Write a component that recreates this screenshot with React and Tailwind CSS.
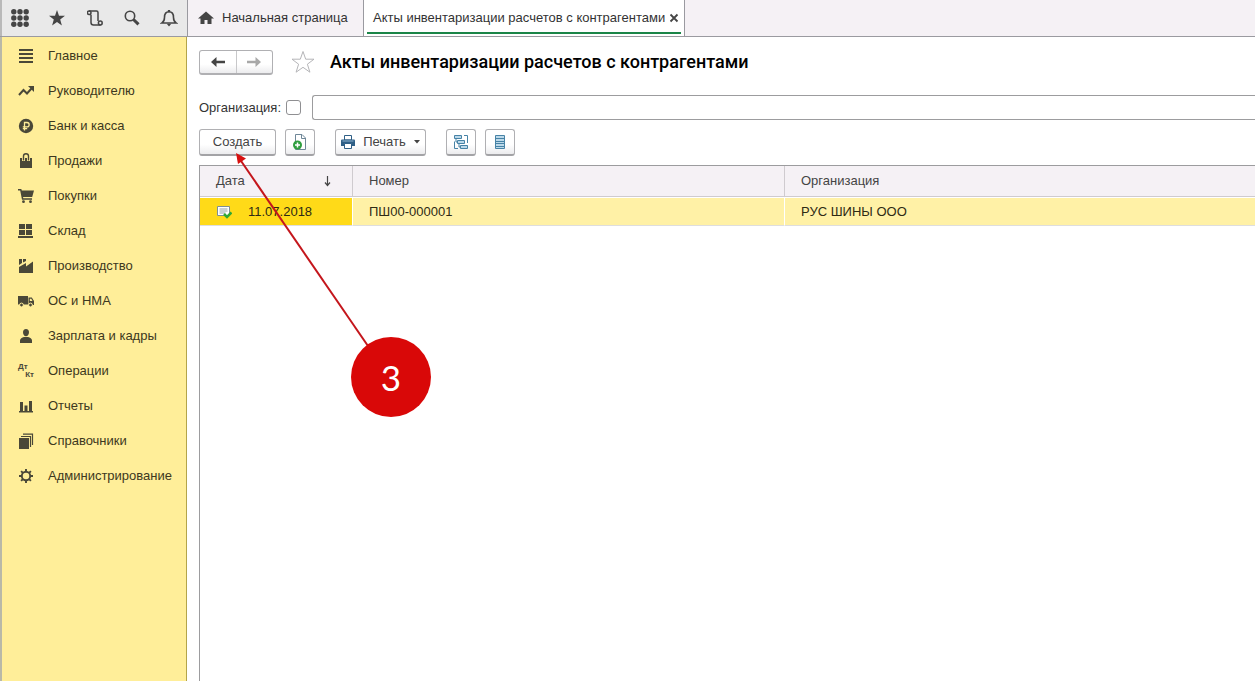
function Svg({ children, w = 16, className = '' }) {
  return (
    <svg width={w} height={w} viewBox="0 0 16 16" fill="currentColor" aria-hidden="true" className={'shrink-0 ' + className}>
      {children}
    </svg>
  );
}

const icons = {
  menu: <path d="M1 1h14v2H1zM1 5h14v2H1zM1 9h14v2H1zM1 13h14v2H1z" />,
  trend: (
    <>
      <path d="M1 12l4.500-5 3.500 3.500 4.500-5" fill="none" stroke="currentColor" strokeWidth="2" />
      <path d="M10 3h6v6z" />
    </>
  ),
  ruble: (
    <>
      <circle cx="8" cy="8" r="7.200" />
      <path d="M6.500 12.500V4.500h2.500a2 2 0 0 1 0 4.300H4.800M4.800 10.700h4.400" fill="none" stroke="#ffee99" strokeWidth="1.300" />
    </>
  ),
  bag: (
    <>
      <path d="M2 5h12v10H2z" />
      <path d="M5.500 8V3.500Q5.500 1 8 1t2.500 2.500V8" fill="none" stroke="#ffee99" strokeWidth="3" />
      <path d="M5.500 7.500V3Q5.500 .8 8 .8t2.500 2.200v4.500" fill="none" stroke="currentColor" strokeWidth="1.400" />
      <path d="M7 5h2v3H7z" />
    </>
  ),
  cart: (
    <>
      <path d="M0 1h3.300l.5 1.500H16L14.200 9H5l.3 1.300h8.700v1.500H4L2.200 2.500H0z" />
      <circle cx="5.500" cy="13.700" r="1.400" />
      <circle cx="12.500" cy="13.700" r="1.400" />
    </>
  ),
  stock: <path d="M1 1h6v5H1zM8 1h6v5H8zM1 7h6v5H1zM8 7h6v5H8zM0 13h15v2H0z" />,
  factory: <path d="M1 15V9l7-4v3.500l7-5V15zM1 1h3v4L1 7zM5 1h3v2L5 4.500z" />,
  truck: (
    <>
      <path d="M0 3h10v8.500H0zM10.500 4.500h3.300L16 8v4h-5.500z" />
      <path d="M11.800 5.700h1.500L14.500 8h-2.700z" fill="#ffee99" />
      <circle cx="3.500" cy="12" r="1.900" stroke="#ffee99" />
      <circle cx="12.500" cy="12" r="1.900" stroke="#ffee99" />
    </>
  ),
  person: <path d="M8 1c2 0 3 1.400 3 3.200C11 6.500 9.800 8.200 8 8.200S5 6.500 5 4.200C5 2.400 6 1 8 1zM2 15v-2.500C2 10.500 4 9.500 6 9h4c2 .5 4 1.500 4 3.500V15z" />,
  chart: <path d="M1 13h14v1.500H1zM2 4h3v9H2zM6.500 7.500h3V13h-3zM11 3h3v10h-3z" />,
  books: (
    <>
      <path d="M1 5h10v11H1z" />
      <path d="M3 3.500h9.500V14M5 1.200h9.500V12" fill="none" stroke="currentColor" strokeWidth="1.200" />
    </>
  ),
  gear: (
    <>
      <circle cx="8" cy="8" r="4.200" fill="none" stroke="currentColor" strokeWidth="1.900" />
      <path d="M8 1v3M8 12v3M1 8h3M12 8h3M3.100 3.100l2 2M10.900 10.900l2 2M12.900 3.100l-2 2M5.100 10.900l-2 2" stroke="currentColor" strokeWidth="1.900" />
    </>
  ),
};

const sections = [
  ['menu', 'Главное'],
  ['trend', 'Руководителю'],
  ['ruble', 'Банк и касса'],
  ['bag', 'Продажи'],
  ['cart', 'Покупки'],
  ['stock', 'Склад'],
  ['factory', 'Производство'],
  ['truck', 'ОС и НМА'],
  ['person', 'Зарплата и кадры'],
  ['dtkt', 'Операции'],
  ['chart', 'Отчеты'],
  ['books', 'Справочники'],
  ['gear', 'Администрирование'],
];

function DtKt() {
  return (
    <span aria-hidden="true" className="flex h-4 w-4 shrink-0 flex-col text-[8px] leading-[8px] font-bold text-[#4a4838]">
      <span>Дт</span>
      <span className="self-end">Кт</span>
    </span>
  );
}

const tools = [
  [
    'Все функции',
    <Svg w={18}>
      {[2.500, 8, 13.500].map((y) => [2.500, 8, 13.500].map((x) => <circle key={x + '-' + y} cx={x} cy={y} r="2.400" />))}
    </Svg>,
  ],
  ['Избранное', <Svg><path d="M8 0l2 5.700 6 .1-4.800 3.700L12.900 15.500 8 12l-4.900 3.500 1.700-6L0 5.800l6-.1z" /></Svg>],
  [
    'История',
    <Svg>
      <g fill="none" stroke="currentColor" strokeWidth="1.500">
        <path d="M4 4.800V12.500q0 2.500 2.500 2.500h7M2 1H9.500Q11 1 11 2.500V11" />
        <circle cx="2.200" cy="2.800" r="1.800" />
        <circle cx="13.300" cy="13" r="1.900" />
      </g>
    </Svg>,
  ],
  [
    'Поиск',
    <Svg>
      <circle cx="6" cy="6" r="4.700" fill="none" stroke="currentColor" strokeWidth="1.600" />
      <path d="M9.500 9.500l5 4.800" stroke="currentColor" strokeWidth="3" />
    </Svg>,
  ],
  [
    'Уведомления',
    <Svg w={18}>
      <path d="M1.500 12.500q2.500-1.500 2.500-5C4 4 5.500 2.500 8 2.500s4 1.500 4 5q0 3.500 2.500 5z" fill="none" stroke="currentColor" strokeWidth="1.400" />
      <path d="M7 .8h2v2H7zM6 13h4l-2 2.500z" />
    </Svg>,
  ],
];

const btn =
  'flex h-[27px] items-center justify-center rounded-[3px] border border-[#b0b0b3] border-b-2 border-b-[#a3a3a6] bg-linear-to-b from-white from-60% to-[#ececee] text-[#444]';

function ArrowIcon({ flip }) {
  return (
    <svg width="14" height="10" viewBox="0 0 14 10" fill="currentColor" aria-hidden="true" className={flip ? 'rotate-180' : ''}>
      <path d="M0 5l5.500-5v3.700H14v2.600H5.500V10z" />
    </svg>
  );
}

export default function App() {
  return (
    <div className="relative flex min-h-screen flex-col overflow-hidden bg-white font-['Liberation_Sans',Arial,sans-serif] text-[13px] leading-4 text-[#333]">
      <header className="flex h-[37px] border-b border-[#9a9aa0] bg-[#f5f1f5]">
        <div className="flex w-[188px] shrink-0 items-center justify-between border-r border-l-2 border-r-[#9a9aa0] border-l-[#b9b9b9] bg-[#e9e9e9] pr-2 pl-2 text-[#454545]">
          {tools.map(([label, icon]) => (
            <button key={label} type="button" aria-label={label} className="flex w-5 justify-center">
              {icon}
            </button>
          ))}
        </div>
        <nav className="flex">
          <a href="#home" className="flex w-44 items-center gap-2 border-r border-[#9a9aa0] pl-2.5 whitespace-nowrap">
            <Svg className="text-[#454545]"><path d="M8 1.500l8 7h-2.500V14H9.500v-4h-3v4H2.500V8.500H0z" /></Svg>
            Начальная страница
          </a>
          <div className="flex border-r border-[#9a9aa0] bg-white px-[3px]">
            <div className="mb-0.5 flex items-center gap-1 border-b-2 border-[#1b8548] pt-1 pr-0.5 pl-1.5 whitespace-nowrap">
              <a href="#acts">Акты инвентаризации расчетов с контрагентами</a>
              <button type="button" aria-label="Закрыть вкладку">
                <svg width="10" height="10" viewBox="0 0 10 10" stroke="#454545" strokeWidth="1.800" aria-hidden="true">
                  <path d="M1.500 1.500l7 7M8.500 1.500l-7 7" />
                </svg>
              </button>
            </div>
          </div>
        </nav>
      </header>

      <div className="flex grow">
        <aside className="w-[187px] shrink-0 border-r border-l-2 border-r-[#b3a44a] border-l-[#b9b9a8] bg-[#ffee99] pt-px">
          <ul>
            {sections.map(([icon, label]) => (
              <li key={label}>
                <a href={'#' + icon} className="flex h-[35px] items-center gap-3.5 pl-4 whitespace-nowrap text-[#3d3820]">
                  {icon === 'dtkt' ? <DtKt /> : <Svg className="text-[#4a4838]">{icons[icon]}</Svg>}
                  {label}
                </a>
              </li>
            ))}
          </ul>
        </aside>

        <main className="flex min-w-0 grow flex-col pt-3 pl-3">
          <div className="flex h-[26px] items-center">
            <div className="flex h-[25px] w-[74px] rounded-[3px] border border-b-2 border-[#b0b0b3] bg-linear-to-b from-white from-60% to-[#ececee]">
              <button type="button" aria-label="Назад" className="flex flex-1 items-center justify-center border-r border-[#c8c8ca] text-[#444]">
                <ArrowIcon />
              </button>
              <button type="button" aria-label="Вперед" className="flex flex-1 items-center justify-center text-[#a8a8a8]">
                <ArrowIcon flip />
              </button>
            </div>
            <button type="button" aria-label="Добавить в избранное" className="ml-[18px]">
              <svg width="24" height="24" viewBox="0 0 24 24" fill="none" stroke="#b5b5b8" aria-hidden="true">
                <path d="M12 1.500l2.700 7.700h8.300l-6.600 5 2.500 8L12 17.300l-6.900 4.900 2.500-8L1 9.200h8.300z" />
              </svg>
            </button>
            <h1 className="ml-[15px] font-[Roboto,sans-serif] text-[18px] leading-6 font-medium whitespace-nowrap text-black">Акты инвентаризации расчетов с контрагентами</h1>
          </div>

          <div className="mt-5 flex h-[25px] items-center">
            <label htmlFor="use-org" className="w-[87px]">Организация:</label>
            <input id="use-org" type="checkbox" className="size-[15px] appearance-none rounded-[3px] border border-[#8f8f92] bg-white checked:bg-[#1b8548]" />
            <input type="text" aria-label="Организация" className="ml-[11px] h-[25px] min-w-0 grow rounded-l-[3px] border border-r-0 border-[#9c9c9e] px-2" />
          </div>

          <div className="mt-[9px] flex">
            <button type="button" className={btn + ' w-[77px]'}>Создать</button>
            <button type="button" aria-label="Создать копированием" className={btn + ' ml-[9px] w-[30px]'}>
              <svg width="16" height="16" viewBox="0 0 16 16" aria-hidden="true">
                <path d="M3.500.5h6.500l3.500 3.500v11.500h-10z" fill="#fff" stroke="#6f8798" />
                <path d="M9.500.5v4h4" fill="none" stroke="#6f8798" />
                <circle cx="5.500" cy="11" r="4.500" fill="#2f9e3f" />
                <path d="M5.500 8.500v5M3 11h5" stroke="#fff" strokeWidth="1.500" />
              </svg>
            </button>
            <button type="button" className={btn + ' ml-5 w-[91px] gap-2'}>
              <svg width="14" height="14" viewBox="0 0 14 14" aria-hidden="true">
                <path d="M3.500.500h7V5h-7z" fill="#fff" stroke="#2f5f86" />
                <path d="M1 4.500h12q1 0 1 1V11H0V5.500q0-1 1-1z" fill="#2f5f86" />
                <path d="M1.500 6h11" stroke="#8fb4d0" />
                <path d="M3.500 8.500h7v5h-7z" fill="#fff" stroke="#2f5f86" />
              </svg>
              Печать
              <svg width="6" height="4" viewBox="0 0 6 4" fill="#444" aria-hidden="true"><path d="M0 0h6L3 3.500z" /></svg>
            </button>
            <button type="button" aria-label="Структура подчиненности" className={btn + ' ml-5 w-[30px]'}>
              <svg width="16" height="16" viewBox="0 0 16 16" fill="#bcd9ea" stroke="#4783a6" aria-hidden="true">
                <path d="M1.500 1.500h7v3h-7zM4.500 6.500h7v3h-7zM7.500 11.500h7v3h-7z" />
                <path d="M3 4.500v3.500h1.500M6 9.500V13h1.500M11 1.500h3.500V9M1.500 7.500v7H5" fill="none" />
              </svg>
            </button>
            <button type="button" aria-label="Реестр документов" className={btn + ' ml-[9px] w-[30px]'}>
              <svg width="16" height="16" viewBox="0 0 16 16" stroke="#4783a6" aria-hidden="true">
                <path d="M3.500 1.500h9v13h-9z" fill="#bcd9ea" />
                <path d="M3.500 4.500h9M3.500 7.500h9M3.500 9.500h9M3.500 12.500h9" />
              </svg>
            </button>
          </div>

          <div className="mt-[9px] grow border-t border-l border-[#9c9c9e]">
            <table className="w-full table-fixed border-separate border-spacing-0 text-left">
              <colgroup>
                <col className="w-[153px]" />
                <col className="w-[432px]" />
                <col />
              </colgroup>
              <thead>
                <tr className="h-[31px] bg-[#f5f1f5] text-[#444]">
                  <th className="border-r border-b border-[#cfcbcf] px-4 font-normal">
                    <span className="flex items-center justify-between pr-1">
                      Дата
                      <svg width="9" height="12" viewBox="0 0 9 12" fill="none" stroke="#444" aria-hidden="true">
                        <path d="M4.500 1v9.500M2 7.500l2.500 3 2.500-3" strokeWidth="1.200" />
                      </svg>
                    </span>
                  </th>
                  <th className="border-r border-b border-[#cfcbcf] px-4 font-normal">Номер</th>
                  <th className="border-b border-[#cfcbcf] px-4 font-normal">Организация</th>
                </tr>
              </thead>
              <tbody>
                <tr className="h-[29px] text-[#2e2a14]">
                  <td className="border-t border-r border-b border-t-white border-r-white border-b-[#dedede] bg-[#ffda18] bg-clip-padding pl-4">
                    <span className="flex items-center gap-4">
                      <svg width="16" height="14" viewBox="0 0 16 14" aria-hidden="true">
                        <path d="M1.500 1.500h12v9h-12z" fill="#fff" stroke="#7d8f96" />
                        <path d="M3.500 4h8M3.500 6h8M3.500 8h6" stroke="#8fa0a8" />
                        <path d="M8 9l3 3 4.500-4.500" fill="none" stroke="#2fa836" strokeWidth="2.500" />
                      </svg>
                      11.07.2018
                    </span>
                  </td>
                  <td className="border-t border-r border-b border-t-white border-r-white border-b-[#dedede] bg-[#fff1a6] bg-clip-padding px-4">ПШ00-000001</td>
                  <td className="border-t border-b border-t-white border-b-[#dedede] bg-[#fff1a6] bg-clip-padding px-4">РУС ШИНЫ ООО</td>
                </tr>
              </tbody>
            </table>
          </div>
        </main>
      </div>

      <div className="pointer-events-none absolute top-[150px] left-[230px]">
        <svg width="140" height="200" viewBox="0 0 140 200" aria-hidden="true">
          <path d="M9 8L138 196" stroke="#c4161c" strokeWidth="2" />
          <path d="M6 3l10 5.500-8 5.500z" fill="#d8100f" />
        </svg>
      </div>
      <div className="pointer-events-none absolute top-[337px] left-[351px] flex size-20 items-center justify-center rounded-full bg-[#d90808] font-[Lato,sans-serif] text-[35px] leading-10 text-white">
        3
      </div>
    </div>
  );
}
